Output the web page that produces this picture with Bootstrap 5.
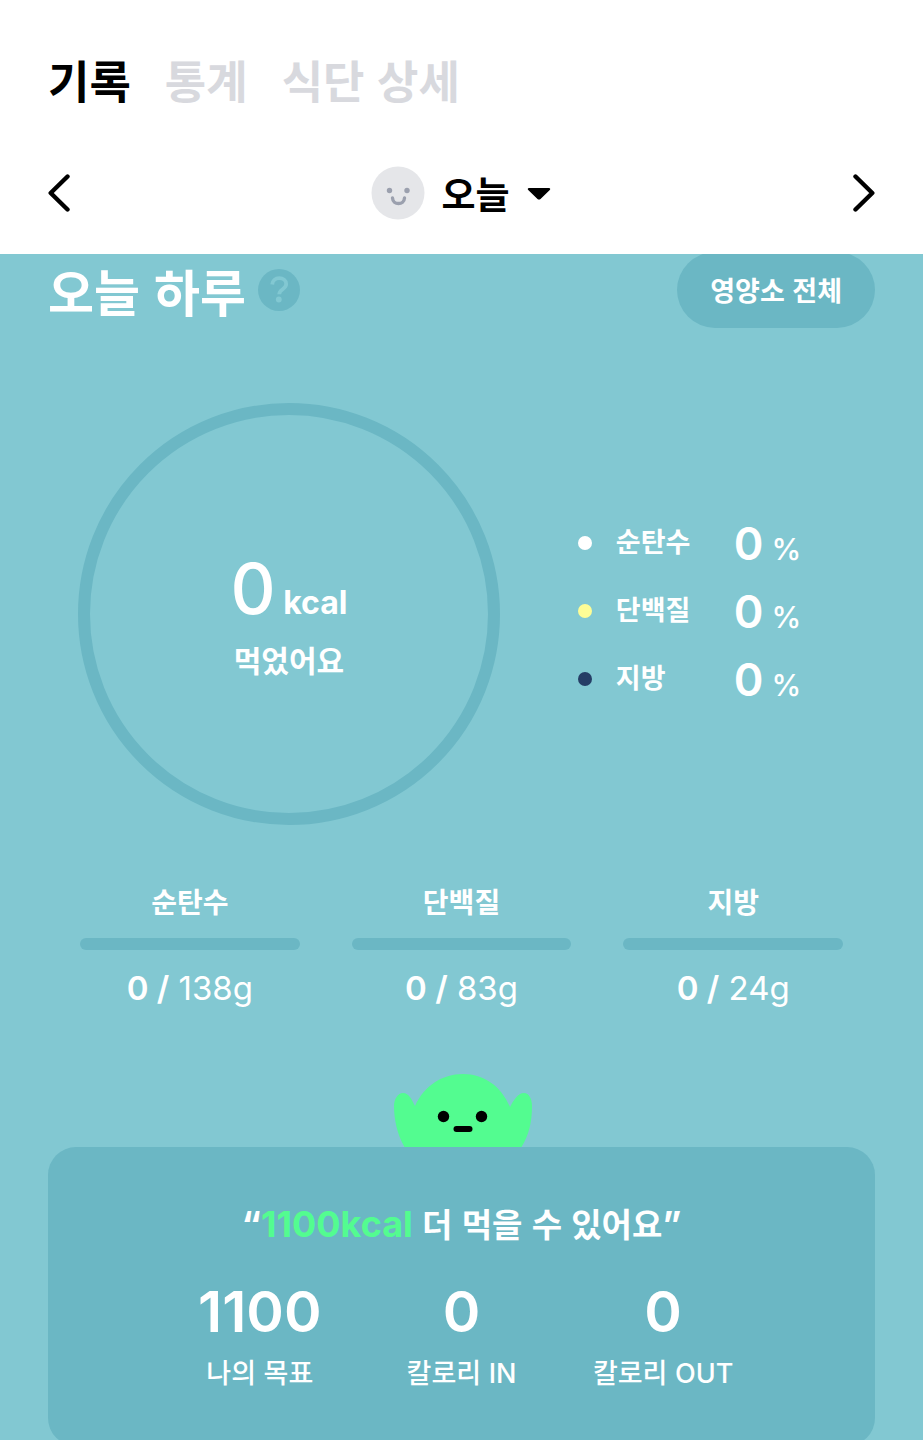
<!DOCTYPE html>
<html lang="ko">
<head>
<meta charset="utf-8">
<meta name="viewport" content="width=device-width, initial-scale=1">
<title>기록</title>
<link rel="stylesheet" href="https://cdn.jsdelivr.net/npm/bootstrap@5.3.0/dist/css/bootstrap.min.css">
<style>
  :root { --sea: #82c8d2; --sea-deep: #6bb7c4; --lime: #53fc90; }
  body { font-family: "Noto Sans CJK KR", sans-serif; color: #000; }
  .num { font-family: Inter, "Noto Sans CJK KR", sans-serif; }
  .fw-mid { font-weight: 500; }
  .gutter { padding-left: 48px; padding-right: 48px; }

  .tabs { gap: 34px; padding-top: 48px; }
  .tabs a { font-size: 45px; line-height: 64px; font-weight: 700; color: #d8d9de; text-decoration: none; }
  .tabs a.active { color: #000; }
  .day-bar { padding-top: 48px; padding-bottom: 28px; }
  .plain { border: 0; padding: 0; background: none; color: inherit; line-height: 0; }
  .day-pick { gap: 16px; font-size: 37px; line-height: 66px; font-weight: 700; }

  .board { background: var(--sea); color: #fff; min-height: 0; scrollbar-width: none; }
  .board::-webkit-scrollbar { display: none; }
  .board-head { margin-top: -2px; gap: 12px; }
  .board-title { font-size: 50px; line-height: 60px; }
  .pill { background: var(--sea-deep); color: #fff; border: 0; border-radius: 38px; font-size: 27px; line-height: 76px; padding: 0 33px; }

  .intake { padding: 75px 78px 0; gap: 78px; }
  .ring { width: 55%; aspect-ratio: 1; border: 12px solid var(--sea-deep); }
  .ring-num { font-size: 70px; line-height: 76px; }
  .ring-unit { font-size: 32px; }
  .ring-label { font-size: 30px; line-height: 36px; }
  .legend-list { padding-bottom: 6px; }
  .legend-row { height: 68px; }
  .dot { width: 14px; height: 14px; margin-right: 24px; }
  .legend-name { width: 118px; font-size: 27px; line-height: 60px; padding-bottom: 4px; }
  .legend-num { font-size: 45px; line-height: 60px; padding-top: 8px; }
  .legend-unit { font-size: 30px; }

  .goals { padding: 54px 80px 0; gap: 52px; }
  .goal { flex: 1 1 0; }
  .goal-name { font-size: 28px; line-height: 44px; }
  .goal .progress { height: 12px; border-radius: 6px; margin: 15px 0 18px; --bs-progress-bg: var(--sea-deep); --bs-progress-bar-bg: #fff; }
  .goal-num { font-size: 33px; line-height: 40px; }

  .mascot { padding-top: 66px; line-height: 0; }
  .summary { background: var(--sea-deep); border-radius: 28px; padding: 52px 111px 50px; }
  .quote { font-size: 33px; line-height: 48px; margin-bottom: 32px; }
  .quote .num { font-size: 36px; }
  .lime { color: var(--lime); }
  .sum-num { font-size: 57px; line-height: 64px; margin-bottom: 6px; }
  .sum-name { font-size: 27px; line-height: 44px; }
</style>
</head>
<body>
<div class="d-flex flex-column vh-100">
  <header class="bg-white">
    <nav class="tabs gutter d-flex" aria-label="메뉴">
      <a class="active" href="#record" aria-current="page">기록</a>
      <a href="#stats">통계</a>
      <a href="#detail">식단 상세</a>
    </nav>
    <div class="day-bar gutter d-flex align-items-center justify-content-between">
      <button class="plain" type="button" aria-label="이전 날">
        <svg width="22" height="40" viewBox="0 0 22 40" fill="none" stroke="#000" stroke-width="4.4" stroke-linecap="round" stroke-linejoin="round"><path d="M19.5 3.5 2.7 20l16.8 16.5"/></svg>
      </button>
      <button class="plain day-pick d-flex align-items-center" type="button" aria-haspopup="true">
        <svg width="54" height="54" viewBox="0 0 54 54" aria-hidden="true"><circle cx="27" cy="27" r="26.5" fill="#e5e6e9"/><circle cx="18.500" cy="24.500" r="2.700" fill="#9ba0ae"/><circle cx="36" cy="24.500" r="2.700" fill="#9ba0ae"/><path d="M21.500 32c.4 7.300 11.600 7.300 12 0" fill="none" stroke="#9ba0ae" stroke-width="3.400" stroke-linecap="round"/></svg>
        <span>오늘</span>
        <svg width="26" height="16" viewBox="0 0 26 16" aria-hidden="true"><path d="M3 3h20c1.200 0 1.700 1.200.8 2L14.500 14c-.9.800-2.100.800-3 0L2.200 5c-.9-.8-.4-2 .8-2z"/></svg>
      </button>
      <button class="plain" type="button" aria-label="다음 날">
        <svg width="22" height="40" viewBox="0 0 22 40" fill="none" stroke="#000" stroke-width="4.400" stroke-linecap="round" stroke-linejoin="round"><path d="M2.500 3.500 19.300 20 2.500 36.500"/></svg>
      </button>
    </div>
  </header>

  <main class="board flex-grow-1 overflow-auto">
    <div class="board-head gutter d-flex align-items-center">
      <h1 class="board-title fw-bold mb-0">오늘 하루</h1>
      <button class="plain" type="button" aria-label="도움말">
        <svg width="42" height="42" viewBox="0 0 42 42" fill="none"><circle cx="21" cy="21" r="21" fill="#6bb7c4"/><path d="M14.200 15.500c.3-4 3.200-6.400 7-6.400s7 2.300 7 6c0 5.300-7 4.900-7 10.200" stroke="#82c8d2" stroke-width="3.800"/><circle cx="20.800" cy="30.500" r="2.900" fill="#82c8d2"/></svg>
      </button>
      <button class="pill fw-bold ms-auto" type="button">영양소 전체</button>
    </div>

    <section class="intake d-flex align-items-center">
      <div class="ring rounded-circle flex-shrink-0 d-flex flex-column align-items-center justify-content-center">
        <div class="ring-num num fw-mid">0<span class="ring-unit fw-bold"> kcal</span></div>
        <div class="ring-label fw-bold">먹었어요</div>
      </div>
      <ul class="legend-list list-unstyled mb-0">
        <li class="legend-row d-flex align-items-center"><span class="dot rounded-circle" style="background:#fff"></span><span class="legend-name fw-bold">순탄수</span><span class="legend-num num fw-semibold">0<span class="legend-unit fw-mid"> %</span></span></li>
        <li class="legend-row d-flex align-items-center"><span class="dot rounded-circle" style="background:#fdfd96"></span><span class="legend-name fw-bold">단백질</span><span class="legend-num num fw-semibold">0<span class="legend-unit fw-mid"> %</span></span></li>
        <li class="legend-row d-flex align-items-center"><span class="dot rounded-circle" style="background:#253e66"></span><span class="legend-name fw-bold">지방</span><span class="legend-num num fw-semibold">0<span class="legend-unit fw-mid"> %</span></span></li>
      </ul>
    </section>

    <section class="goals d-flex text-center">
      <div class="goal">
        <div class="goal-name fw-bold">순탄수</div>
        <div class="progress" role="progressbar" aria-label="순탄수" aria-valuenow="0" aria-valuemin="0" aria-valuemax="138"><div class="progress-bar" style="width:0%"></div></div>
        <div class="goal-num num"><span class="fw-semibold">0 /</span> 138g</div>
      </div>
      <div class="goal">
        <div class="goal-name fw-bold">단백질</div>
        <div class="progress" role="progressbar" aria-label="단백질" aria-valuenow="0" aria-valuemin="0" aria-valuemax="83"><div class="progress-bar" style="width:0%"></div></div>
        <div class="goal-num num"><span class="fw-semibold">0 /</span> 83g</div>
      </div>
      <div class="goal">
        <div class="goal-name fw-bold">지방</div>
        <div class="progress" role="progressbar" aria-label="지방" aria-valuenow="0" aria-valuemin="0" aria-valuemax="24"><div class="progress-bar" style="width:0%"></div></div>
        <div class="goal-num num"><span class="fw-semibold">0 /</span> 24g</div>
      </div>
    </section>

    <div class="mascot text-center">
      <svg width="140" height="73" viewBox="0 0 140 73" aria-hidden="true"><path d="M12.500 73C5 60 2 45 2 32c0-7 4-13 9-13 6 0 9 7 12 13C32 12 50 0 71 0s38 12 47 33c3-6 8-14 14-14 5 0 8 6 8 13 0 16-3 29-10.500 41z" fill="#53fc90"/><circle cx="51.500" cy="42.500" r="5.700"/><circle cx="89.500" cy="42.500" r="5.700"/><rect x="61.500" y="52" width="19" height="6" rx="3"/></svg>
    </div>

    <div class="gutter">
      <section class="summary text-center">
        <p class="quote fw-bold"><span class="num">“</span><span class="num lime">1100kcal</span> 더 먹을 수 있어요<span class="num">”</span></p>
        <div class="row g-0">
          <div class="col-4"><div class="sum-num num fw-semibold">1100</div><div class="sum-name fw-mid text-nowrap">나의 목표</div></div>
          <div class="col-4"><div class="sum-num num fw-semibold">0</div><div class="sum-name fw-mid text-nowrap">칼로리 <span class="num">IN</span></div></div>
          <div class="col-4"><div class="sum-num num fw-semibold">0</div><div class="sum-name fw-mid text-nowrap">칼로리 <span class="num">OUT</span></div></div>
        </div>
      </section>
    </div>
  </main>
</div>
<script src="https://cdn.jsdelivr.net/npm/bootstrap@5.3.0/dist/js/bootstrap.bundle.min.js"></script>
</body>
</html>
